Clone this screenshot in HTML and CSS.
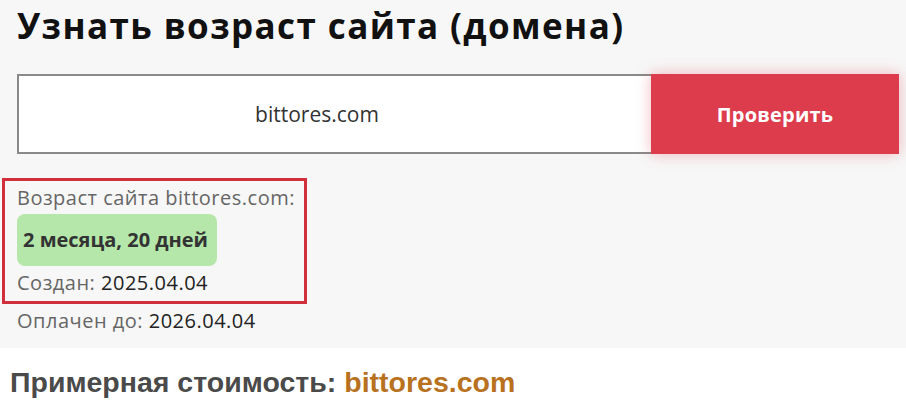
FILE: index.html
```html
<!DOCTYPE html>
<html lang="ru">
<head>
    <meta charset="UTF-8">
    <meta name="viewport" content="width=device-width, initial-scale=1.0">
    <title>Узнать возраст сайта</title>
    <link rel="stylesheet" href="styles.css">
</head>
<body>

<!-- Check block -->
<div class="panel">
    <h1 class="title">Узнать возраст сайта (домена)</h1>

    <form class="check-form" onsubmit="return false;">
        <input type="text" class="domain-input" value="bittores.com">
        <button class="check-button" type="submit">Проверить</button>
    </form>

    <!-- Result -->
    <div class="result-box">
        <div class="line label">Возраст сайта bittores.com:</div>
        <div class="age-badge">2 месяца, 20 дней</div>
        <div class="line"><span class="label">Создан:</span> <span class="value">2025.04.04</span></div>
    </div>
    <div class="line paid"><span class="label">Оплачен до:</span> <span class="value">2026.04.04</span></div>
</div>

<h2 class="price-title">Примерная стоимость: <span class="domain">bittores.com</span></h2>

</body>
</html>
```

FILE: styles.css
```css
body {
    margin: 0;
    padding: 0;
    background-color: #fff;
    font-family: 'Open Sans', sans-serif;
    color: #222;
}

.panel {
    background-color: #f7f7f7;
    height: 348px;
    padding: 0 7px 0 2px;
    box-sizing: border-box;
    overflow: hidden;
}

.title {
    margin: 0 0 0 15px;
    padding-top: 3px;
    font-size: 35px;
    font-weight: 700;
    letter-spacing: 1.4px;
    line-height: 46px;
    color: #111;
}

.check-form {
    display: flex;
    margin: 25px 0 0 15px;
    height: 80px;
}

.domain-input {
    flex: 1;
    box-sizing: border-box;
    border: 2px solid #8a8a8a;
    border-right: none;
    padding: 0 36px 0 0;
    background: #fff;
    font-family: 'Open Sans', sans-serif;
    font-size: 21px;
    color: #333;
    text-align: center;
    outline: none;
}

.check-button {
    width: 248px;
    border: none;
    background-color: #dd3c4c;
    color: #fff;
    font-family: 'Open Sans', sans-serif;
    font-size: 20px;
    font-weight: 700;
    letter-spacing: 0.2px;
    cursor: pointer;
    box-shadow: 0 0 14px rgba(221, 60, 76, 0.35);
}

/* Result block */
.result-box {
    margin-top: 24px;
    width: 305px;
    height: 126px;
    box-sizing: border-box;
    border: 3px solid #d22f3d;
    padding: 4px 0 0 12px;
}

.line {
    font-size: 20px;
    letter-spacing: 0.5px;
    line-height: 26px;
}

.label {
    color: #666;
}

.value {
    color: #222;
}

.age-badge {
    display: inline-block;
    margin: 3px 0 4px;
    padding: 0 6px;
    width: 200px;
    box-sizing: border-box;
    height: 52px;
    line-height: 52px;
    border-radius: 8px;
    background-color: #b4e7a9;
    font-size: 20px;
    font-weight: 700;
    color: #333;
}

.paid {
    margin: 4px 0 0 15px;
}

.price-title {
    margin: 18px 0 0 10px;
    font-family: 'Liberation Sans', Arial, sans-serif;
    font-size: 28.5px;
    font-weight: 700;
    color: #4a4a4a;
}

.price-title .domain {
    color: #b8721f;
}
```
